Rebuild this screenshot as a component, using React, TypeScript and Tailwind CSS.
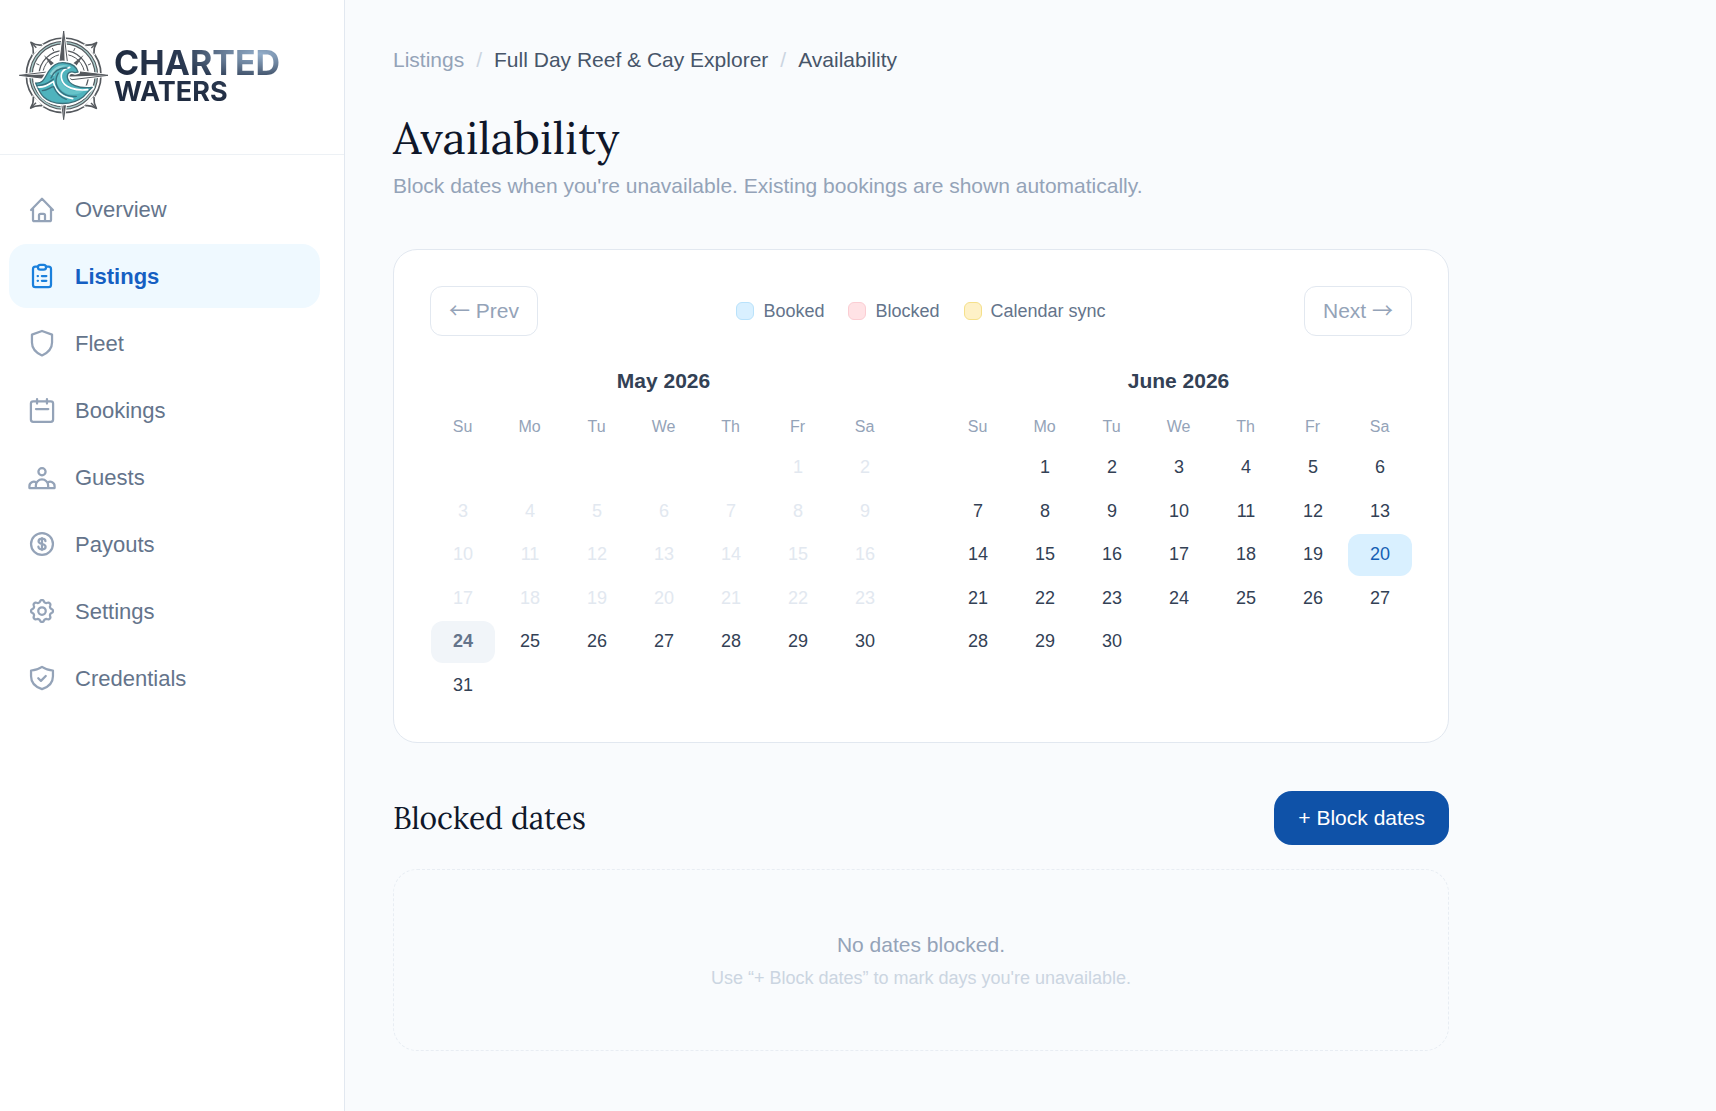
import type { ReactNode } from "react";

const sans = "font-['Liberation_Sans',Arial,sans-serif]";
const serif = "font-['Lora','Liberation_Serif',serif]";

const quarterTurns = [0, 90, 180, 270];
const waveBody =
  "M76 190c24 2 28-18 39-35 14-21 32-29 52-25 16 2 31 9 36 27l-9 2c-12-6-24 0-23 13 2 22 33 36 75 31-14 12-17 19-27 28-33 27-92 27-119 1-11-10-17-25-24-42z";

function Emblem() {
  const dark = "#55595e";
  return (
    <svg viewBox="20 28 276 279" className="h-[93px] w-[92px] shrink-0" fill="none" aria-hidden="true">
      <circle cx="160" cy="167" r="112" stroke={dark} strokeWidth="5" />
      <circle cx="160" cy="167" r="98" stroke={dark} strokeWidth="11" />
      <circle cx="160" cy="167" r="98" stroke="#a9cccb" strokeWidth="4" />
      <path d="M86 167a74 74 0 0 1 148 0M234 170a74 74 0 0 1-16 44" stroke={dark} strokeWidth="4" />
      <path d="M97 167a63 63 0 0 1 126 0" stroke={dark} strokeWidth="3" />
      <path d="M126 85l4 9M194 85l-4 9M78 132l9 4M242 132l-9 4M241 203l-9-4" stroke={dark} strokeWidth="3" />
      {quarterTurns.map((a) => (
        <g key={a} transform={`rotate(${a} 160 167)`}>
          <path d="M62 68c11 7 20 9 31 8l-24 24c1-12-1-21-7-32z" fill="#fff" stroke="#fff" strokeWidth="6" />
          <path d="M62 68c11 7 20 9 31 8M62 68c6 11 8 20 7 32" stroke={dark} strokeWidth="5" strokeLinecap="round" />
          <path d="M62 68l16 16" stroke={dark} strokeWidth="4" />
        </g>
      ))}
      <path d="M100 106l34 27-9 10zM220 106l-34 27 9 10z" fill={dark} />
      {quarterTurns.map((a) => (
        <g key={a} transform={`rotate(${a} 160 167)`}>
          <path d="M160 34l17 116h-34z" fill="#fff" stroke="#fff" strokeWidth="7" />
          <path d="M160 34l13 108-13 25-13-25z" fill="#fff" stroke={dark} strokeWidth="3" strokeLinejoin="round" />
          <path d="M160 34l4 131-17-23z" fill={dark} />
        </g>
      ))}
      <path d={waveBody} fill="#4fb3bd" stroke="#fff" strokeWidth="13" strokeLinejoin="round" />
      <path d={waveBody} fill="#4fb3bd" stroke="#3a6f7a" strokeWidth="4" strokeLinejoin="round" />
      <path d="M118 164c14-24 34-32 56-25-24 1-38 12-42 31" fill="#8fd3d6" />
      <path d="M170 146c-18 7-25 22-19 38 8 22 38 34 72 28-24 20-57 16-76-8-15-18-10-46 23-58z" fill="#67c3c9" />
      <path
        d="M178 143c-19 4-29 17-24 36 6 25 43 35 78 31M84 202c26 2 34-12 45-16 6 28 26 46 58 51"
        stroke="#fff"
        strokeWidth="5"
        strokeLinecap="round"
      />
      <path
        d="M122 175c8-20 23-31 48-30M144 160c-12 22-7 43 10 58 12 10 28 14 44 12M82 197c25 2 36-12 48-19M96 213c16-1 23-10 34-12 6 16 18 30 38 38"
        stroke="#37707e"
        strokeWidth="4"
        strokeLinecap="round"
      />
    </svg>
  );
}

function Icon({ children }: { children: ReactNode }) {
  return (
    <svg
      viewBox="0 0 20 20"
      className="size-[30px] shrink-0"
      fill="none"
      stroke="currentColor"
      strokeWidth="1.5"
      strokeLinecap="round"
      strokeLinejoin="round"
      aria-hidden="true"
    >
      {children}
    </svg>
  );
}

const gearPoints = Array.from({ length: 96 }, (_, i) => {
  const t = (i / 96) * Math.PI * 2;
  const wave = Math.tanh(1.4 * Math.cos(8 * t)) / Math.tanh(1.4);
  const r = 6.6 + 0.7 * wave;
  return `${(10 + r * Math.sin(t)).toFixed(2)},${(10 - r * Math.cos(t)).toFixed(2)}`;
}).join(" ");

const navItems: { label: string; icon: ReactNode; active?: boolean }[] = [
  {
    label: "Overview",
    icon: (
      <path d="M2.7 10.7 10 3.2l7.3 7.5M4 9.4v7.7c0 .6.4 1 1 1h10c.6 0 1-.4 1-1V9.4M8 18v-3.8c0-.6.4-1 1-1h2c.6 0 1 .4 1 1V18" />
    ),
  },
  {
    label: "Listings",
    active: true,
    icon: (
      <>
        <path d="M7.3 3.800H5.600C4.700 3.800 4 4.500 4 5.400v10.400c0 .9.700 1.600 1.600 1.600h8.800c.9 0 1.600-.7 1.600-1.600V5.400c0-.9-.7-1.600-1.600-1.600h-1.700" />
        <rect x="7.300" y="2.500" width="5.400" height="3.200" rx="1.600" />
        <path d="M7.100 10h.2M9.900 10h3M7.100 13.200h.2M9.900 13.200h3" />
      </>
    ),
  },
  {
    label: "Fleet",
    icon: <path d="M10 2l6.700 2.400v5.200c0 4-2.600 6.800-6.700 8.700-4.100-1.900-6.700-4.700-6.700-8.700V4.400z" />,
  },
  {
    label: "Bookings",
    icon: (
      <>
        <rect x="2.600" y="4.200" width="14.800" height="13.700" rx="1.500" />
        <path d="M6.700 2.700v3M13.300 2.700v3M6 9.400h8.200" />
      </>
    ),
  },
  {
    label: "Guests",
    icon: (
      <>
        <circle cx="10" cy="6.500" r="2.400" />
        <path d="M1.600 17.400h16.800M5.900 17.400v-1.700a4.100 4.100 0 0 1 8.200 0v1.700M1.600 17.400v-1.300a2.900 2.900 0 0 1 4.600-2.400M18.400 17.400v-1.300a2.900 2.900 0 0 0-4.600-2.400" />
      </>
    ),
  },
  {
    label: "Payouts",
    icon: (
      <>
        <circle cx="10" cy="10" r="7.300" />
        <path d="M12.300 8.100c0-1-.9-1.700-2.300-1.700S7.700 7.100 7.700 8.200c0 2.500 4.700 1.100 4.700 3.600 0 1.100-1 1.800-2.400 1.800s-2.400-.7-2.400-1.800M10 6v8" />
      </>
    ),
  },
  {
    label: "Settings",
    icon: (
      <>
        <polygon points={gearPoints} />
        <circle cx="10" cy="10" r="2.500" />
      </>
    ),
  },
  {
    label: "Credentials",
    icon: (
      <>
        <path d="M10 2.600c2.200 1.500 4.500 2.300 7.300 2.400v3.800c0 4.200-2.700 7.100-7.300 8.600-4.600-1.500-7.300-4.400-7.300-8.600V5c2.800-.1 5.100-.9 7.300-2.400z" />
        <path d="M7.500 10.200l1.800 1.700 3.200-3.200" />
      </>
    ),
  },
];

function Sidebar() {
  return (
    <aside className="w-[345px] shrink-0 border-r border-[#e2e8f0] bg-white">
      <div className="flex items-center gap-[5px] border-b border-[#edf1f5] px-[17px] pt-[29px] pb-8">
        <Emblem />
        <div className="bg-[radial-gradient(ellipse_at_88%_12%,#93aecb_0%,#6c829c_16%,#2b3a52_38%,#1f2b40_70%)] bg-clip-text font-['Inter',sans-serif] font-bold text-transparent">
          <div className="text-[34px] leading-[32px]">CHARTED</div>
          <div className="text-[27px] leading-[26px]">WATERS</div>
        </div>
      </div>
      <nav aria-label="Main" className="pt-[22px] pr-6 pl-[9px]">
        <ul className="flex flex-col gap-[3px]">
          {navItems.map((item) => (
            <li key={item.label}>
              <a
                href="#"
                aria-current={item.active ? "page" : undefined}
                className={
                  item.active
                    ? "flex h-16 items-center gap-[18px] rounded-[18px] bg-[#eff9ff] px-[18px] text-[22px] font-bold text-[#155fc2]"
                    : "flex h-16 items-center gap-[18px] rounded-[18px] px-[18px] text-[22px] text-[#64748b]"
                }
              >
                <span className={item.active ? "text-[#1a80dc]" : "text-[#94a3b8]"}>
                  <Icon>{item.icon}</Icon>
                </span>
                {item.label}
              </a>
            </li>
          ))}
        </ul>
      </nav>
    </aside>
  );
}

const weekdays = ["Su", "Mo", "Tu", "We", "Th", "Fr", "Sa"];

function Month({
  title,
  offset,
  days,
  today = 0,
  booked = [],
}: {
  title: string;
  offset: number;
  days: number;
  today?: number;
  booked?: number[];
}) {
  const weeks = Array.from({ length: 6 }, (_, r) => Array.from({ length: 7 }, (_, c) => r * 7 + c - offset + 1));
  const tone = (d: number) => {
    if (d === today) return "bg-[#f1f5f9] font-bold text-[#64748b]";
    if (booked.includes(d)) return "bg-[#d9f0ff] text-[#155fb4]";
    if (d < today) return "text-[#e2e8f0]";
    return "text-[#334155]";
  };
  return (
    <section className="min-w-0 flex-1">
      <h2 className="mb-[19px] text-center text-[21px] leading-[30px] font-bold text-[#334155]">{title}</h2>
      <div className="-mx-px">
        <table className="h-[292px] w-full table-fixed text-center" aria-label={title}>
          <thead>
            <tr className="h-[31px]">
              {weekdays.map((w) => (
                <th key={w} scope="col" className="p-0 pb-[7px] text-[16px] leading-[24px] font-normal text-[#94a3b8]">
                  {w}
                </th>
              ))}
            </tr>
          </thead>
          <tbody>
            {weeks.map((week, r) => (
              <tr key={r}>
                {week.map((d) => (
                  <td key={d} className="py-0 pr-px pl-[2px]">
                    {d > 0 && d <= days ? (
                      <button
                        type="button"
                        disabled={d < today}
                        className={`block h-[42px] w-full rounded-[12px] text-[18px] ${tone(d)}`}
                      >
                        {d}
                      </button>
                    ) : (
                      <div className="h-[42px]" />
                    )}
                  </td>
                ))}
              </tr>
            ))}
          </tbody>
        </table>
      </div>
    </section>
  );
}

const legend = [
  { label: "Booked", swatch: "border-[#b9e2fb] bg-[#d9f0ff]" },
  { label: "Blocked", swatch: "border-[#fbcdd3] bg-[#ffe2e5]" },
  { label: "Calendar sync", swatch: "border-[#f5e08a] bg-[#fef1c7]" },
];

function Arrow({ children }: { children: string }) {
  return <span className="font-['Noto_Sans_CJK_SC',sans-serif] leading-none">{children}</span>;
}

export default function App() {
  const pager =
    "h-[50px] rounded-[12px] border border-[#e2e8f0] px-[18px] text-[21px] leading-[30px] whitespace-nowrap text-[#94a3b8]";
  return (
    <div className={`flex min-h-screen bg-[#f9fbfd] ${sans}`}>
      <Sidebar />
      <main className="min-w-0 flex-1 px-12 pt-[45px] pb-[60px]">
        <div className="max-w-[1056px]">
          <nav aria-label="Breadcrumb" className="flex gap-3 text-[21px] leading-[30px] text-[#475569]">
            <a href="#" className="text-[#94a3b8]">
              Listings
            </a>
            <span className="text-[#cbd5e1]">/</span>
            <a href="#">Full Day Reef &amp; Cay Explorer</a>
            <span className="text-[#cbd5e1]">/</span>
            <span aria-current="page">Availability</span>
          </nav>
          <h1 className={`mt-[35px] text-[45px] leading-[56px] text-[#0f172a] ${serif}`}>Availability</h1>
          <p className="mt-[5px] text-[21px] leading-[30px] text-[#94a3b8]">
            Block dates when you're unavailable. Existing bookings are shown automatically.
          </p>

          <div className="mt-12 rounded-[24px] border border-[#e2e8f0] bg-white px-9 pt-9 pb-[35px]">
            <div className="flex items-center justify-between">
              <button type="button" className={pager}>
                <Arrow>←</Arrow> Prev
              </button>
              <ul className="flex gap-6 text-[18px] leading-[27px] text-[#64748b]">
                {legend.map((l) => (
                  <li key={l.label} className="flex items-center gap-[9px]">
                    <span className={`size-[18px] rounded-[6px] border ${l.swatch}`} />
                    {l.label}
                  </li>
                ))}
              </ul>
              <button type="button" className={pager}>
                Next <Arrow>→</Arrow>
              </button>
            </div>
            <div className="mt-[30px] flex gap-12">
              <Month title="May 2026" offset={5} days={31} today={24} />
              <Month title="June 2026" offset={1} days={30} booked={[20]} />
            </div>
          </div>

          <div className="mt-12 flex items-center justify-between">
            <h2 className={`text-[30px] leading-[42px] text-[#0f172a] ${serif}`}>Blocked dates</h2>
            <button type="button" className="h-[54px] rounded-[18px] bg-[#0f52a8] px-6 text-[21px] text-white">
              + Block dates
            </button>
          </div>

          <div className="mt-6 rounded-[24px] border border-dashed border-[#e8edf3] pt-[60px] pb-[58px] text-center">
            <p className="text-[21px] leading-[30px] text-[#94a3b8]">No dates blocked.</p>
            <p className="mt-[5px] text-[18px] leading-[27px] text-[#cbd5e1]">
              Use “+ Block dates” to mark days you're unavailable.
            </p>
          </div>
        </div>
      </main>
    </div>
  );
}
